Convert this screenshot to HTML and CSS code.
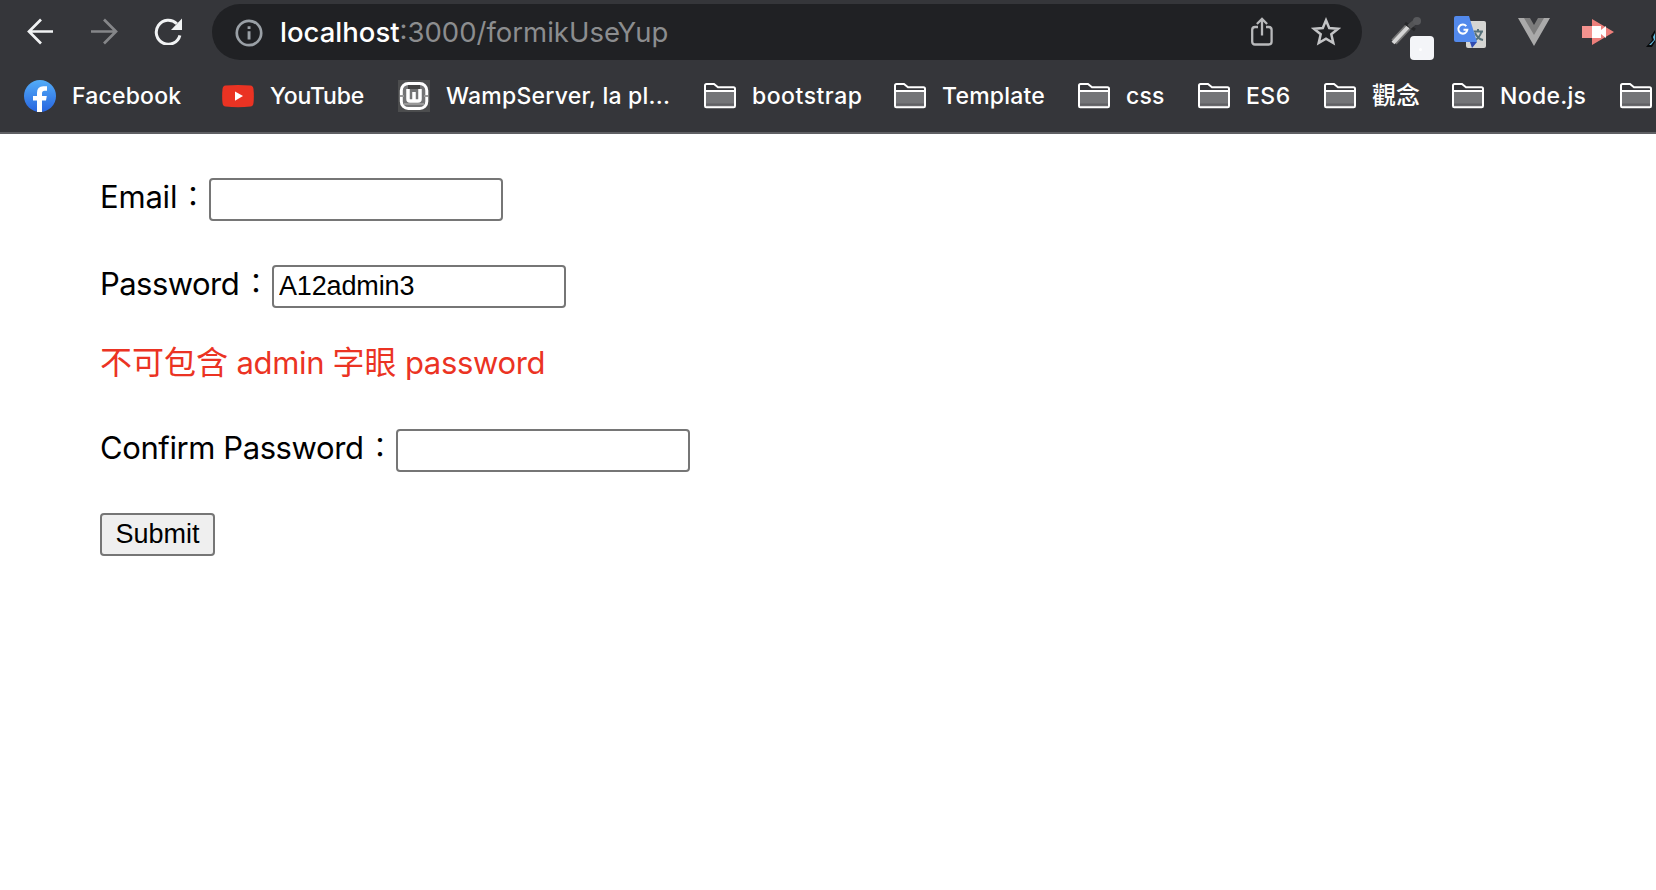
FILE: index.html
```html
<!DOCTYPE html>
<html lang="zh-Hant">
<head>
<meta charset="utf-8">
<title>formikUseYup</title>
<link rel="stylesheet" href="styles.css">
</head>
<body>
<svg class="defs" width="0" height="0"><defs>
<symbol id="folder" viewBox="0 0 32 26"><path d="M1 8H31V24H1Z" fill="#747578"/><path d="M2 21.5H30" stroke="#606164" stroke-width="2"/><path d="M1 7.5V2.5Q1 1 2.5 1H10L14 4.2H29.5Q31 4.2 31 5.7V23Q31 24.3 29.7 24.3H2.3Q1 24.3 1 23V8H31" fill="none" stroke="#fff" stroke-width="2"/></symbol>
</defs></svg>
<header class="browser">
  <div class="toolbar">
    <nav class="nav">
      <svg width="28" height="28" viewBox="0 0 28 28" fill="none" stroke="#f1f3f4" stroke-width="2.7"><path d="M27 14.5H3M15 2.5L3 14.5L15 26.5"/></svg>
      <svg width="28" height="28" viewBox="0 0 28 28" fill="none" stroke="#858689" stroke-width="2.7"><path d="M1 14.5H26M14 2.5L26 14.5L14 26.5"/></svg>
      <svg width="28" height="28" viewBox="0 0 28 28"><path d="M25.9 18.3A12 12 0 1 1 22.8 6.8" fill="none" stroke="#f1f3f4" stroke-width="3"/><path d="M28 1.5V13H17Z" fill="#f1f3f4"/></svg>
    </nav>
    <div class="address">
      <svg class="info" width="28" height="28" viewBox="0 0 28 28"><circle cx="14" cy="14" r="12.2" fill="none" stroke="#9aa0a6" stroke-width="2.7"/><path d="M12.6 7.3h2.9v2.8h-2.9zM12.6 12.3h2.9v8.2h-2.9z" fill="#9aa0a6"/></svg>
      <span class="url"><span class="host">localhost</span><span class="path">:3000/formikUseYup</span></span>
      <svg class="share" width="24" height="30" viewBox="0 0 24 30" fill="none" stroke="#b8b9bb" stroke-width="2.3"><path d="M8 10H5Q2.2 10 2.2 13V24.5Q2.2 27.5 5 27.5H18.7Q21.6 27.5 21.6 24.5V13Q21.6 10 18.7 10H16M12 18.5V2M6.9 7L12 1.9L17.1 7"/></svg>
      <svg class="star" width="30" height="30" viewBox="0 0 30 30" fill="none" stroke="#c3c4c6" stroke-width="2.5"><path d="M15 3.3L18.2 11L27 11.8L20.3 17.3L22.3 26L15 21.6L7.7 26L9.7 17.3L3 11.8L11.8 11Z"/></svg>
    </div>
    <div class="extensions">
      <svg width="44" height="46" viewBox="0 0 44 46"><path d="M4 27L18 12" stroke="#777" stroke-width="7"/><path d="M3 28L18 12" stroke="#d5d5d5" stroke-width="4"/><path d="M15 8L25 15" stroke="#262729" stroke-width="3"/><path d="M19 12L26 6" stroke="#535456" stroke-width="5"/><circle cx="27" cy="6" r="4" fill="#58595c"/><rect x="20" y="21" width="24" height="24" rx="4" fill="#f4f5f8"/><circle cx="30.5" cy="34.5" r="1.5" fill="#fff"/></svg>
      <svg width="32" height="32" viewBox="0 0 32 32"><rect x="12" y="5" width="20" height="27" rx="2" fill="#d5d5d3"/><path d="M19.5 15.5H29M24 13V16M27.5 16Q25 22.5 20 25M21 17Q24 23 29 24" fill="none" stroke="#56717a" stroke-width="2"/><path d="M16 26H23L18 32Z" fill="#304bb0"/><path d="M2 0H15L23 26H2Q0 26 0 24V2Q0 0 2 0Z" fill="#5289ec"/><path d="M12.3 10.2A4.5 4.5 0 1 0 13.3 13.8H9.5" fill="none" stroke="#fff" stroke-width="2"/></svg>
      <svg width="32" height="28" viewBox="0 0 32 28"><path d="M0 0H7L16 15L25 0H32L16 28Z" fill="#aaa"/><path d="M6 0H12L16 7L20 0H26L16 17Z" fill="#7d7d7d"/></svg>
      <svg width="32" height="28" viewBox="0 0 32 28"><path d="M10 1L32 14L10 27V20H0V8H10Z" fill="#ed7f7b"/><path d="M0 8H10V20H0Z" fill="#f3928e"/><path d="M10 8H19V12L24 8V20L19 16V20H10Z" fill="#fff"/></svg>
      <svg width="9" height="18" viewBox="0 0 9 18"><path d="M9 0L5 6L6 10L0 17H6L9 12Z" fill="#080a0b"/><path d="M9 3L7 7L8 10L3 15H5L9 10Z" fill="#65bce0"/></svg>
    </div>
  </div>
  <div class="bookmarks">
    <a class="mark fb"><svg width="32" height="32" viewBox="0 0 32 32"><defs><linearGradient id="blue" x2="0" y2="1"><stop stop-color="#53adf8"/><stop offset="1" stop-color="#2764df"/></linearGradient></defs><circle cx="16" cy="16" r="16" fill="url(#blue)"/><path d="M13 32V20.5H9V16H13V13Q13 6.3 19.3 6.3H23V10.8H20.5Q18 10.8 18 13.3V16H22.8L22 20.5H18V32Z" fill="#fff"/></svg><span>Facebook</span></a>
    <a class="mark yt"><svg width="32" height="32" viewBox="0 0 32 32"><path d="M3.5 5.5Q16 4.5 28.5 5.5Q31 5.8 31.5 9Q32.2 16 31.5 23Q31 26.2 28.5 26.6Q16 27.8 3.5 26.6Q1 26.2.5 23Q-.2 16 .5 9Q1 5.8 3.5 5.5Z" fill="#ea3323"/><path d="M13 11.5L21 16L13 20.7Z" fill="#fff"/></svg><span>YouTube</span></a>
    <a class="mark wamp"><svg width="32" height="32" viewBox="0 0 32 32"><path d="M0 0H32V32H0Z" fill="#4c4d4e"/><rect x="3.3" y="3.5" width="25.5" height="25" rx="7" fill="#737475" stroke="#fff" stroke-width="3"/><path d="M10 5H22V9H10Z" fill="#444"/><path d="M10 9V19Q10 21 12 21H20Q22 21 22 19V9M16 12V20" fill="none" stroke="#fff" stroke-width="3.5"/><path d="M6 24H26M2 16H6M26 16H30" stroke="#999" stroke-width="2"/></svg><span>WampServer, la pl...</span></a>
    <a class="mark bootstrap"><svg class="folder"><use href="#folder"/></svg><span>bootstrap</span></a>
    <a class="mark template"><svg class="folder"><use href="#folder"/></svg><span>Template</span></a>
    <a class="mark css"><svg class="folder"><use href="#folder"/></svg><span>css</span></a>
    <a class="mark es"><svg class="folder"><use href="#folder"/></svg><span>ES6</span></a>
    <a class="mark concept"><svg class="folder"><use href="#folder"/></svg><span>觀念</span></a>
    <a class="mark node"><svg class="folder"><use href="#folder"/></svg><span>Node.js</span></a>
    <a class="mark"><svg class="folder"><use href="#folder"/></svg></a>
  </div>
</header>
<main class="form">
  <div class="field email"><label for="email"><span>Email</span><i>：</i></label><input id="email" type="text"></div>
  <div class="field password"><label for="password"><span>Password</span><i>：</i></label><input id="password" type="text" value="A12admin3"></div>
  <p class="error"><span class="han">不可包含</span> admin <span class="han">字眼</span> password</p>
  <div class="field confirm"><label for="confirm"><span>Confirm Password</span><i>：</i></label><input id="confirm" type="text"></div>
  <button class="submit" type="button">Submit</button>
</main>
</body>
</html>
```
FILE: styles.css
```css
* { box-sizing: border-box; }
body { margin: 0; height: 890px; overflow: hidden; background: #fff; color: #000; font-family: Inter, "Noto Sans CJK TC", sans-serif; }
svg { display: block; flex: none; }
.defs { position: absolute; }
.browser { height: 134px; background: #35363a; border-bottom: 2px solid #5f6064; overflow: hidden; }
.toolbar { display: flex; height: 64px; padding-top: 4px; }
.nav { display: flex; width: 212px; gap: 36px; padding: 13px 0 0 26px; }
.address { display: flex; align-items: center; width: 1150px; height: 56px; border-radius: 28px; background: #202124; padding: 0 21px 0 22px; }
.info { margin: 1px 0 0 1px; }
.url { margin-left: 17px; font-size: 27.5px; line-height: 56px; white-space: nowrap; }
.host { color: #fff; font-weight: 500; letter-spacing: 0; }
.path { color: #8c8d8f; letter-spacing: 0; }
.share { margin: 0 1px 0 auto; }
.star { margin-left: 36px; }
.extensions { display: flex; padding: 12px 0 0 28px; }
.extensions svg:nth-child(1) { margin: -1px 20px 0 0; }
.extensions svg:nth-child(2) { margin-right: 32px; }
.extensions svg:nth-child(3) { margin: 2px 32px 0 0; }
.extensions svg:nth-child(4) { margin: 2px 32px 0 0; }
.extensions svg:nth-child(5) { margin-top: 14px; }
.bookmarks { display: flex; height: 64px; padding-left: 24px; }
.mark { display: flex; align-items: center; gap: 16px; flex: none; color: #fff; font-size: 23px; font-weight: 500; letter-spacing: .2px; white-space: nowrap; }
.mark span { line-height: 32px; }
.folder { width: 32px; height: 26px; }
.fb { width: 198px; }
.yt { width: 176px; letter-spacing: -.2px; }
.wamp { width: 306px; letter-spacing: .22px; }
.bootstrap { width: 190px; letter-spacing: .5px; }
.template { width: 184px; }
.css { width: 120px; }
.es { width: 126px; letter-spacing: .5px; }
.concept { width: 128px; font-size: 24px; letter-spacing: 0; }
.node { width: 168px; letter-spacing: .3px; }
.form { padding: 44px 0 0 100px; }
.field { display: flex; align-items: flex-start; height: 43px; }
.field label { display: flex; flex: none; font-size: 31px; line-height: 38px; white-space: nowrap; }
.field i { margin: -2px 0 0 auto; width: 30px; font-size: 28px; font-style: normal; font-family: "Noto Sans CJK TC", sans-serif; }
.email label { width: 109px; letter-spacing: -.2px; }
.password { margin-top: 44px; }
.password label { width: 172px; letter-spacing: -.55px; }
.confirm label { width: 296px; letter-spacing: -.41px; }
.field input { width: 294px; height: 43px; padding: 0 5px; border: 2px solid #767676; border-radius: 4px; background: #fff; color: #000; font: 27px "Liberation Sans", sans-serif; letter-spacing: -.15px; }
.error { height: 40px; margin: 35px 0 46px; color: #eb3323; font-size: 31px; letter-spacing: -.33px; line-height: 40px; white-space: nowrap; }
.han { font-size: 32px; letter-spacing: 0; }
.submit { display: block; width: 115px; height: 43px; margin-top: 41px; padding: 0; border: 2px solid #767676; border-radius: 4px; background: #efefef; color: #000; font: 27px "Liberation Sans", sans-serif; }
```
